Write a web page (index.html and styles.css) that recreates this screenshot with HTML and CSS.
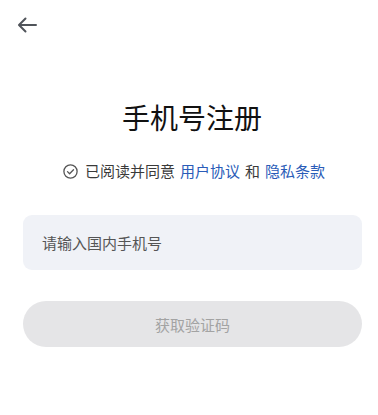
FILE: index.html
```html
<!DOCTYPE html>
<html lang="zh-CN">
<head>
<meta charset="utf-8">
<title>手机号注册</title>
<link rel="stylesheet" href="styles.css">
</head>
<body>
<div class="page">
  <header class="header">
    <svg class="back" width="20" height="16" viewBox="0 0 20 16" aria-hidden="true">
      <path d="M19 8H2.5M8.5 1.5L2 8l6.5 6.5" fill="none" stroke="#50545a" stroke-width="2" stroke-linecap="round" stroke-linejoin="round"/>
    </svg>
  </header>
  <h1 class="title">手机号注册</h1>
  <div class="agree">
    <svg class="check" width="15" height="15" viewBox="0 0 15 15" aria-hidden="true">
      <circle cx="7.5" cy="7.5" r="6.6" fill="none" stroke="#555" stroke-width="1.3"/>
      <path d="M4.5 7.6l2.1 2.1 3.9-4" fill="none" stroke="#555" stroke-width="1.3" stroke-linecap="round" stroke-linejoin="round"/>
    </svg>
    <span>已阅读并同意</span>
    <a class="link">用户协议</a>
    <span>和</span>
    <a class="link">隐私条款</a>
  </div>
  <div class="input-box">
    <span class="placeholder">请输入国内手机号</span>
  </div>
  <button class="btn" type="button">获取验证码</button>
</div>
</body>
</html>
```
FILE: styles.css
```css
html, body {
  margin: 0;
  padding: 0;
  background: #fff;
}
body {
  font-family: "Noto Sans CJK SC", "Noto Sans", sans-serif;
  color: #111;
}
.page {
  width: 378px;
  display: flex;
  flex-direction: column;
}
.header {
  height: 50px;
  padding: 17px 0 0 17px;
  box-sizing: border-box;
}
.back {
  display: block;
}
.title {
  margin: 47px 0 0;
  font-size: 28px;
  line-height: 40px;
  font-weight: 400;
  text-align: center;
  color: #111;
  padding-left: 6px;
}
.agree {
  margin-top: 23px;
  height: 22px;
  display: flex;
  justify-content: center;
  align-items: center;
  gap: 5px;
  font-size: 15px;
  line-height: 22px;
  color: #3a3a3a;
  padding-left: 10px;
}
.check {
  display: block;
  margin-right: 2px;
}
.link {
  color: #2a5cb8;
  text-decoration: none;
}
.input-box {
  margin: 33px 16px 0 23px;
  height: 55px;
  background: #f0f2f7;
  border-radius: 9px;
  display: flex;
  align-items: center;
  padding-left: 19px;
}
.placeholder {
  font-size: 15px;
  color: #555;
}
.btn {
  margin: 31px 16px 0 23px;
  height: 46px;
  border: none;
  border-radius: 23px;
  background: #e5e5e7;
  color: #a3a3a3;
  font-family: inherit;
  font-size: 15px;
  padding: 0;
}
```
